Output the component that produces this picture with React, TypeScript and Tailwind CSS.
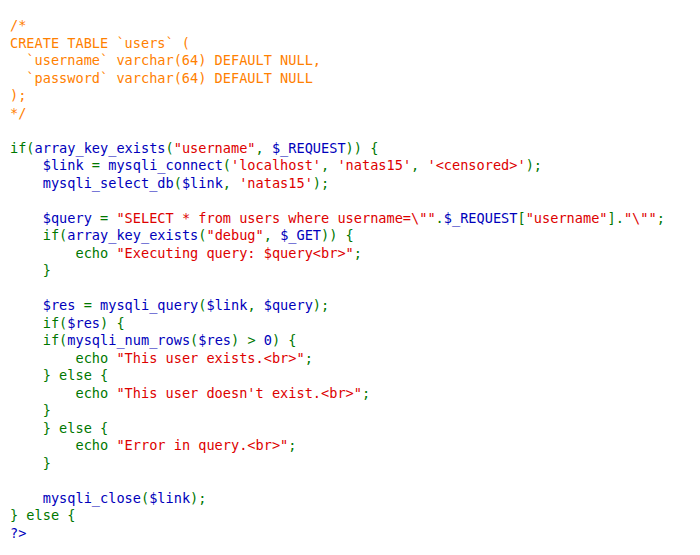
type Tok = [string, string]

const C = "text-[#ff8000]"
const K = "text-[#007700]"
const D = "text-[#0000bb]"
const S = "text-[#dd0000]"

const c = (t: string): Tok => [C, t]
const k = (t: string): Tok => [K, t]
const d = (t: string): Tok => [D, t]
const s = (t: string): Tok => [S, t]
const sp = (n: number): Tok => [K, " ".repeat(n)]

const lines: Tok[][] = [
  [c("/*")],
  [c("CREATE TABLE `users` (")],
  [c("  `username` varchar(64) DEFAULT NULL,")],
  [c("  `password` varchar(64) DEFAULT NULL")],
  [c(");")],
  [c("*/")],
  [],
  [k("if("), d("array_key_exists"), k("("), s('"username"'), k(", "), d("$_REQUEST"), k(")) {")],
  [sp(4), d("$link "), k("= "), d("mysqli_connect"), k("("), s("'localhost'"), k(", "), s("'natas15'"), k(", "), s("'<censored>'"), k(");")],
  [sp(4), d("mysqli_select_db"), k("("), d("$link"), k(", "), s("'natas15'"), k(");")],
  [],
  [sp(4), d("$query "), k("= "), s('"SELECT * from users where username=\\""'), k("."), d("$_REQUEST"), k("["), s('"username"'), k("]."), s('"\\""'), k(";")],
  [sp(4), k("if("), d("array_key_exists"), k("("), s('"debug"'), k(", "), d("$_GET"), k(")) {")],
  [sp(8), k("echo "), s('"Executing query: $query<br>"'), k(";")],
  [sp(4), k("}")],
  [],
  [sp(4), d("$res "), k("= "), d("mysqli_query"), k("("), d("$link"), k(", "), d("$query"), k(");")],
  [sp(4), k("if("), d("$res"), k(") {")],
  [sp(4), k("if("), d("mysqli_num_rows"), k("("), d("$res"), k(") > "), d("0"), k(") {")],
  [sp(8), k("echo "), s('"This user exists.<br>"'), k(";")],
  [sp(4), k("} else {")],
  [sp(8), k("echo "), s('"This user doesn\'t exist.<br>"'), k(";")],
  [sp(4), k("}")],
  [sp(4), k("} else {")],
  [sp(8), k("echo "), s('"Error in query.<br>"'), k(";")],
  [sp(4), k("}")],
  [],
  [sp(4), d("mysqli_close"), k("("), d("$link"), k(");")],
  [k("} else {")],
  [d("?>")],
]

const App = () => {
  return (
    <main className="w-[700px] h-[555px] bg-white overflow-hidden">
      {/* source listing */}
      <pre className="pt-[17px] pl-[10px] font-['DejaVu_Sans_Mono',monospace] text-[13.6px] leading-[17.5px] whitespace-pre">
        {lines.map((line, i) => (
          <div key={i} className="h-[17.5px]">
            {line.map(([cls, text], j) => (
              <span key={j} className={cls}>{text}</span>
            ))}
          </div>
        ))}
      </pre>
    </main>
  )
}

export default App
